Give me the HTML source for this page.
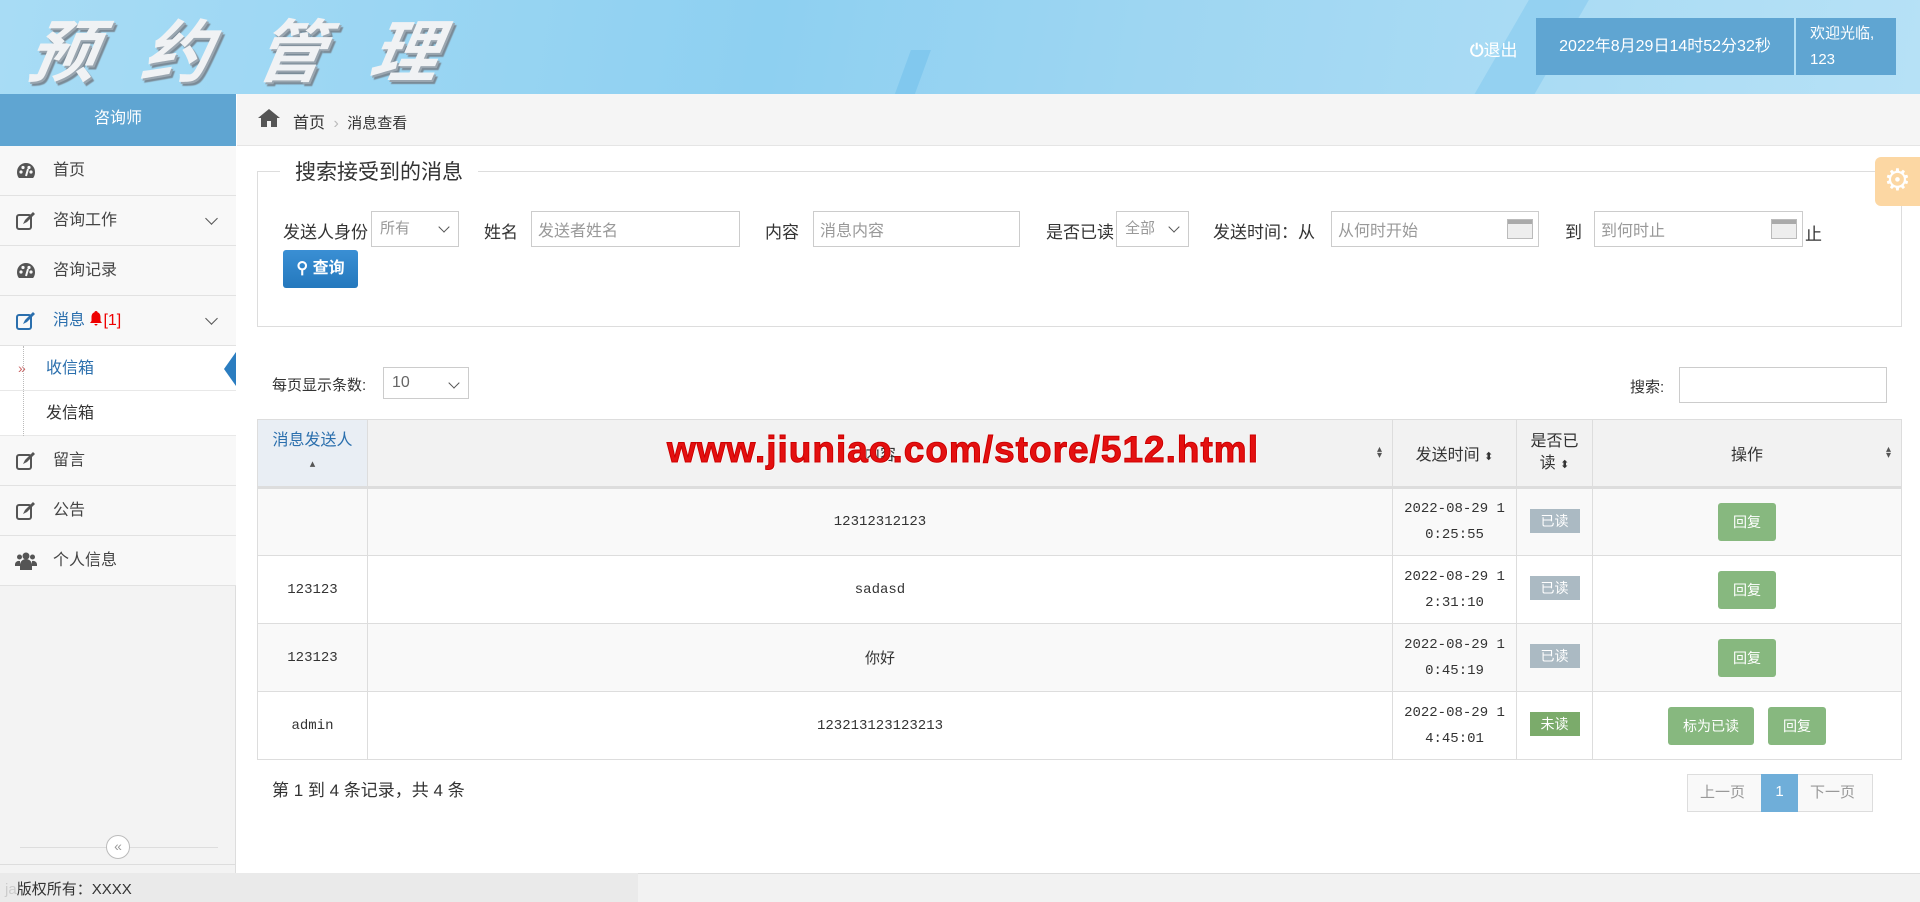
<!DOCTYPE html>
<html><head><meta charset="utf-8"><style>
*{box-sizing:border-box;margin:0;padding:0}
body{width:1920px;height:902px;position:relative;overflow:hidden;background:#fff;font-family:"Liberation Sans","Noto Sans CJK SC",sans-serif;color:#333}
.abs{position:absolute}
#hdr{left:0;top:0;width:1920px;height:94px;background:linear-gradient(100deg,#a8dcf5 0%,#8ed0f1 40%,#9ed6f2 60%,#b6e1f6 100%);overflow:hidden}
#title{left:30px;top:2px;font-size:68px;line-height:90px;font-weight:bold;font-style:italic;color:#f0f2f4;letter-spacing:46px;text-shadow:2px 2px 0 #9aa6b0,4px 4px 1px #7a8a96;font-family:"Noto Sans CJK SC",sans-serif;transform:skewX(-10deg)}
.stripe{background:#64b9ea;opacity:.6}
#side{left:0;top:94px;width:236px;height:779px;background:#f3f3f3;border-right:1px solid #ddd}
.mi{position:absolute;left:0;width:236px;height:50px;border-bottom:1px solid #e2e2e2;background:#f8f8f8;font-size:16px;line-height:50px;padding-left:53px;color:#444}
.ico{position:absolute;left:15px;top:15px;width:22px;height:20px}
.chev{position:absolute;right:16px;top:0;font-size:14px;color:#666}
.sub{position:absolute;left:0;width:236px;height:45px;background:#fff;border-bottom:1px solid #e8e8e8;font-size:16px;line-height:45px;padding-left:46px}
td,th{border:1px solid #ddd}
input.f{position:absolute;height:36px;border:1px solid #ccc;font-size:16px;padding-left:6px;color:#999;background:#fff;font-family:inherit}
.sel{position:absolute;height:36px;border:1px solid #ccc;font-size:15px;line-height:34px;padding-left:8px;color:#999;background:#fff}
.sel:after{content:"";position:absolute;right:10px;top:11px;width:7px;height:7px;border-right:1.5px solid #555;border-bottom:1.5px solid #555;transform:rotate(45deg)}
.lbl{position:absolute;font-size:17px;color:#333}
.cal{position:absolute;right:6px;top:8px;width:26px;height:20px;border:1px solid #bbb;background:linear-gradient(#aaa 0 4px,#eee 4px)}
table{position:absolute;left:257px;top:419px;width:1645px;border-collapse:collapse;font-size:14px}
th{height:68px;background:#f2f2f2;font-weight:normal;font-size:16px;color:#333;position:relative;border-bottom:3px solid #ddd}
td{height:68px;text-align:center;font-family:"Liberation Mono","Noto Sans CJK SC",monospace;font-size:14px;color:#333;line-height:26px}
tr.o td{background:#f9f9f9}
.srt{position:absolute;right:10px;top:27px;font-size:10px;line-height:6px;color:#555}
.bd{display:inline-block;width:50px;height:24px;line-height:24px;color:#fff;font-size:14px;background:#abbac3;font-family:"Noto Sans CJK SC",sans-serif}
.btn{display:inline-block;height:38px;line-height:38px;padding:0 15px;background:#87b87f;color:#fff;border-radius:3px;font-size:14px;font-family:"Noto Sans CJK SC",sans-serif}
.chev2{position:absolute;right:20px;top:18px;width:9px;height:9px;border-right:1.5px solid #555;border-bottom:1.5px solid #555;transform:rotate(45deg)}
</style></head><body>
<div id="hdr" class="abs">
 <div class="abs stripe" style="left:1500px;top:-20px;width:60px;height:140px;transform:skewX(-30deg);opacity:.3"></div>
 <div class="abs stripe" style="left:900px;top:50px;width:20px;height:60px;transform:skewX(-20deg);opacity:.4"></div>
 <div class="abs" id="title">预约管理</div>
 <div class="abs" style="left:1470px;top:36px;font-size:17px;color:#fff"><span style="font-weight:bold">⏻</span>退出</div>
 <div class="abs" style="left:1536px;top:18px;width:258px;height:57px;background:#5fa5d2;color:#fff;font-size:16px;line-height:57px;text-align:center">2022年8月29日14时52分32秒</div>
 <div class="abs" style="left:1796px;top:18px;width:100px;height:57px;background:#5fa5d2;color:#fff;font-size:15px;line-height:26px;padding:3px 14px">欢迎光临,<br>123</div>
</div>
<div id="side" class="abs">
 <div class="abs" style="left:0;top:0;width:236px;height:52px;background:#5fa5d2;color:#fff;font-size:16px;text-align:center;line-height:50px">咨询师</div>
 <div class="mi" style="top:52px"><svg class="ico" viewBox="0 0 22 20"><path d="M11 2a9 9 0 0 0-9 9c0 3 1 5 2 6h14c1-1 2-3 2-6a9 9 0 0 0-9-9z" fill="#555"/><circle cx="6" cy="11" r="1.6" fill="#f8f8f8"/><circle cx="8" cy="6.5" r="1.6" fill="#f8f8f8"/><circle cx="14" cy="6.5" r="1.6" fill="#f8f8f8"/><circle cx="16" cy="11" r="1.6" fill="#f8f8f8"/><path d="M11 15l2-7" stroke="#f8f8f8" stroke-width="2"/></svg>首页</div>
 <div class="mi" style="top:102px"><svg class="ico" viewBox="0 0 22 20"><rect x="2" y="4" width="14" height="14" rx="2" fill="none" stroke="#555" stroke-width="2"/><path d="M8 13l2-4 8-8 2 2-8 8z" fill="#555"/></svg>咨询工作<span class="chev2"></span></div>
 <div class="mi" style="top:152px"><svg class="ico" viewBox="0 0 22 20"><path d="M11 2a9 9 0 0 0-9 9c0 3 1 5 2 6h14c1-1 2-3 2-6a9 9 0 0 0-9-9z" fill="#555"/><circle cx="6" cy="11" r="1.6" fill="#f8f8f8"/><circle cx="8" cy="6.5" r="1.6" fill="#f8f8f8"/><circle cx="14" cy="6.5" r="1.6" fill="#f8f8f8"/><circle cx="16" cy="11" r="1.6" fill="#f8f8f8"/><path d="M11 15l2-7" stroke="#f8f8f8" stroke-width="2"/></svg>咨询记录</div>
 <div class="mi" style="top:202px;color:#2b6fad"><svg class="ico" viewBox="0 0 22 20"><rect x="2" y="4" width="14" height="14" rx="2" fill="none" stroke="#2b6fad" stroke-width="2"/><path d="M8 13l2-4 8-8 2 2-8 8z" fill="#2b6fad"/></svg>消息 <svg width="14" height="15" viewBox="0 0 14 15" style="vertical-align:-1px"><path d="M7 0c-1 0-1.5.6-1.5 1.3C3.3 2 2.5 4 2.5 6.5V10L1 12h12l-1.5-2V6.5C11.5 4 10.7 2 8.5 1.3 8.5.6 8 0 7 0zM5.5 13a1.5 1.5 0 0 0 3 0z" fill="#e00"/></svg><span style="color:#e00">[1]</span><span class="chev2"></span></div>
 <div class="sub" style="top:252px;color:#2b6fad"><span class="abs" style="left:18px;color:#c66;font-size:14px">»</span>收信箱<div class="abs" style="right:0;top:6px;width:0;height:0;border-top:17px solid transparent;border-bottom:17px solid transparent;border-right:12px solid #2b7dc0"></div></div>
 <div class="sub" style="top:297px">发信箱</div>
 <div class="abs" style="left:23px;top:252px;height:90px;border-left:1px dotted #bbb"></div>
 <div class="mi" style="top:342px"><svg class="ico" viewBox="0 0 22 20"><rect x="2" y="4" width="14" height="14" rx="2" fill="none" stroke="#555" stroke-width="2"/><path d="M8 13l2-4 8-8 2 2-8 8z" fill="#555"/></svg>留言</div>
 <div class="mi" style="top:392px"><svg class="ico" viewBox="0 0 22 20"><rect x="2" y="4" width="14" height="14" rx="2" fill="none" stroke="#555" stroke-width="2"/><path d="M8 13l2-4 8-8 2 2-8 8z" fill="#555"/></svg>公告</div>
 <div class="mi" style="top:442px"><svg class="ico" viewBox="0 0 22 20"><circle cx="11" cy="5" r="3.5" fill="#555"/><circle cx="4.5" cy="6" r="2.5" fill="#555"/><circle cx="17.5" cy="6" r="2.5" fill="#555"/><path d="M5 19v-5a6 6 0 0 1 12 0v5z M0 15v-2a4 4 0 0 1 5-3v5z M22 15v-2a4 4 0 0 0-5-3v5z" fill="#555"/></svg>个人信息</div>
 <div class="abs" style="left:20px;top:753px;width:198px;border-top:1px solid #ddd"></div>
 <div class="abs" style="left:106px;top:741px;width:24px;height:24px;border:1px solid #bbb;border-radius:50%;background:#fff;font-size:14px;text-align:center;line-height:21px;color:#999">«</div>
 <div class="abs" style="left:0;top:770px;width:236px;border-top:1px solid #ddd"></div>
</div>
<div class="abs" style="left:0;top:873px;width:1920px;height:29px;background:#f2f2f2;border-top:1px solid #ddd"></div>
<div class="abs" style="left:0;top:873px;width:638px;height:29px;background:#eaeaea"></div>
<div class="abs" style="left:5px;top:878px;font-size:15px;color:#ccc">ja<span style="color:#333">版权所有：XXXX</span></div>
<div class="abs" style="left:237px;top:94px;width:1683px;height:52px;background:#f5f5f5;border-bottom:1px solid #e5e5e5"></div>
<svg class="abs" style="left:258px;top:108px" width="22" height="20" viewBox="0 0 22 20"><path d="M11 1L0 10h3v9h6v-6h4v6h6v-9h3z" fill="#555"/></svg>
<div class="abs" style="left:293px;top:109px;font-size:16px">首页 <span style="color:#bbb;margin:0 4px">›</span> <span style="font-size:15px">消息查看</span></div>
<div class="abs" style="left:257px;top:171px;width:1645px;height:156px;border:1px solid #ddd"></div>
<div class="abs" style="left:280px;top:156px;background:#fff;padding:0 15px;font-size:21px;color:#333">搜索接受到的消息</div>
<div class="abs" style="left:1875px;top:157px;width:45px;height:49px;background:#fcd7a3;border-radius:6px 0 0 6px;color:#fff;font-size:30px;line-height:47px;text-align:center">⚙</div>
<span class="lbl" style="left:283px;top:218px">发送人身份</span>
<div class="sel" style="left:371px;top:211px;width:88px">所有</div>
<span class="lbl" style="left:484px;top:218px">姓名</span>
<input class="f" style="left:531px;top:211px;width:209px" value="发送者姓名">
<span class="lbl" style="left:765px;top:218px">内容</span>
<input class="f" style="left:813px;top:211px;width:207px" value="消息内容">
<span class="lbl" style="left:1046px;top:218px">是否已读</span>
<div class="sel" style="left:1116px;top:211px;width:73px">全部</div>
<span class="lbl" style="left:1213px;top:218px">发送时间：从</span>
<div class="abs" style="left:1331px;top:211px;width:208px;height:36px"><input class="f" style="left:0;top:0;width:208px" value="从何时开始"><div class="cal"></div></div>
<span class="lbl" style="left:1565px;top:218px">到</span>
<div class="abs" style="left:1594px;top:211px;width:209px;height:36px"><input class="f" style="left:0;top:0;width:209px" value="到何时止"><div class="cal"></div></div>
<span class="lbl" style="left:1805px;top:220px">止</span>
<div class="abs" style="left:283px;top:250px;width:75px;height:38px;background:linear-gradient(#3a8fd4,#2478bd);border-radius:3px;color:#fff;font-size:16px;line-height:38px;text-align:center;font-weight:bold">⚲ 查询</div>
<span class="lbl" style="left:272px;top:374px;font-size:15px">每页显示条数:</span>
<div class="sel" style="left:383px;top:367px;width:86px;height:32px;line-height:30px;font-size:16px;color:#666">10</div>
<span class="lbl" style="left:1630px;top:376px;font-size:15px">搜索:</span>
<input class="f" style="left:1679px;top:367px;width:208px;height:36px" value="">
<table>
<tr><th style="width:110px;background:#e9eef4;color:#2b6fad;vertical-align:top;line-height:22px;padding:10px 0 0">消息发送人<br><span style="color:#555;font-size:11px">▴<br></span></th><th style="width:1025px">内容<span class="srt">▴<br>▾</span></th><th style="width:124px">发送时间 <span style="font-size:11px">⬍</span></th><th style="width:76px;line-height:22px">是否已<br>读 <span style="font-size:11px">⬍</span></th><th>操作<span class="srt">▴<br>▾</span></th></tr>
<tr class="o"><td></td><td>12312312123</td><td>2022-08-29 1<br>0:25:55</td><td><span class="bd">已读</span></td><td><span class="btn">回复</span></td></tr>
<tr><td>123123</td><td>sadasd</td><td>2022-08-29 1<br>2:31:10</td><td><span class="bd">已读</span></td><td><span class="btn">回复</span></td></tr>
<tr class="o"><td>123123</td><td style="font-family:'Noto Sans CJK SC',sans-serif;font-size:15px">你好</td><td>2022-08-29 1<br>0:45:19</td><td><span class="bd">已读</span></td><td><span class="btn">回复</span></td></tr>
<tr><td>admin</td><td>123213123123213</td><td>2022-08-29 1<br>4:45:01</td><td><span class="bd" style="background:#7bab6b">未读</span></td><td><span class="btn" style="margin-right:14px">标为已读</span><span class="btn">回复</span></td></tr>
</table>
<div class="abs" style="left:667px;top:429px;font-size:37px;font-weight:bold;color:#e41010;letter-spacing:1px;-webkit-text-stroke:1px #c00;text-shadow:1px 1px 0 #fff">www.jiuniao.com/store/512.html</div>
<div class="abs" style="left:272px;top:776px;font-size:17px">第 1 到 4 条记录，共 4 条</div>
<div class="abs" style="left:1687px;top:774px;width:186px;height:38px;border:1px solid #ddd;background:#f9f9f9;font-size:15px;line-height:36px;color:#999">
 <span class="abs" style="left:12px">上一页</span>
 <span class="abs" style="left:73px;top:-1px;width:37px;height:38px;background:#6faed9;color:#fff;text-align:center">1</span>
 <span class="abs" style="left:122px">下一页</span>
</div>
</body></html>
